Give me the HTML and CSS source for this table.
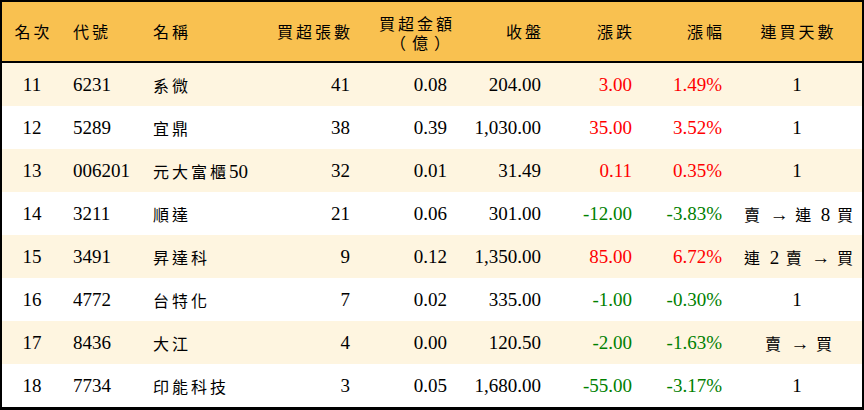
FILE: index.html
```html
<!DOCTYPE html>
<html lang="zh-Hant">
<head>
<meta charset="utf-8">
<link rel="stylesheet" href="styles.css">
</head>
<body>
<div class="board">
  <div class="row head">
    <div class="c c1">名次</div>
    <div class="c c2">代號</div>
    <div class="c c3">名稱</div>
    <div class="c c4">買超張數</div>
    <div class="c c5 two"><span>買超金額</span><span class="paren">（億）</span></div>
    <div class="c c6">收盤</div>
    <div class="c c7">漲跌</div>
    <div class="c c8">漲幅</div>
    <div class="c c9">連買天數</div>
  </div>
  <div class="row odd">
    <div class="c c1">11</div><div class="c c2">6231</div><div class="c c3 cjk">系微</div>
    <div class="c c4">41</div><div class="c c5">0.08</div><div class="c c6">204.00</div>
    <div class="c c7 up">3.00</div><div class="c c8 up">1.49%</div><div class="c c9">1</div>
  </div>
  <div class="row">
    <div class="c c1">12</div><div class="c c2">5289</div><div class="c c3 cjk">宜鼎</div>
    <div class="c c4">38</div><div class="c c5">0.39</div><div class="c c6">1,030.00</div>
    <div class="c c7 up">35.00</div><div class="c c8 up">3.52%</div><div class="c c9">1</div>
  </div>
  <div class="row odd">
    <div class="c c1">13</div><div class="c c2">006201</div><div class="c c3 cjk">元大富櫃<span class="num">50</span></div>
    <div class="c c4">32</div><div class="c c5">0.01</div><div class="c c6">31.49</div>
    <div class="c c7 up">0.11</div><div class="c c8 up">0.35%</div><div class="c c9">1</div>
  </div>
  <div class="row">
    <div class="c c1">14</div><div class="c c2">3211</div><div class="c c3 cjk">順達</div>
    <div class="c c4">21</div><div class="c c5">0.06</div><div class="c c6">301.00</div>
    <div class="c c7 down">-12.00</div><div class="c c8 down">-3.83%</div><div class="c c9 cjk seq">賣 <span class="arw">→</span> 連 <span class="num">8</span> 買</div>
  </div>
  <div class="row odd">
    <div class="c c1">15</div><div class="c c2">3491</div><div class="c c3 cjk">昇達科</div>
    <div class="c c4">9</div><div class="c c5">0.12</div><div class="c c6">1,350.00</div>
    <div class="c c7 up">85.00</div><div class="c c8 up">6.72%</div><div class="c c9 cjk seq">連 <span class="num">2</span> 賣 <span class="arw">→</span> 買</div>
  </div>
  <div class="row">
    <div class="c c1">16</div><div class="c c2">4772</div><div class="c c3 cjk">台特化</div>
    <div class="c c4">7</div><div class="c c5">0.02</div><div class="c c6">335.00</div>
    <div class="c c7 down">-1.00</div><div class="c c8 down">-0.30%</div><div class="c c9">1</div>
  </div>
  <div class="row odd">
    <div class="c c1">17</div><div class="c c2">8436</div><div class="c c3 cjk">大江</div>
    <div class="c c4">4</div><div class="c c5">0.00</div><div class="c c6">120.50</div>
    <div class="c c7 down">-2.00</div><div class="c c8 down">-1.63%</div><div class="c c9 cjk seq">賣 <span class="arw">→</span> 買</div>
  </div>
  <div class="row">
    <div class="c c1">18</div><div class="c c2">7734</div><div class="c c3 cjk">印能科技</div>
    <div class="c c4">3</div><div class="c c5">0.05</div><div class="c c6">1,680.00</div>
    <div class="c c7 down">-55.00</div><div class="c c8 down">-3.17%</div><div class="c c9">1</div>
  </div>
</div>
</body>
</html>
```

FILE: styles.css
```css
html, body {
  margin: 0;
  padding: 0;
  background: #ffffff;
}

.board {
  width: 864px;
  height: 410px;
  box-sizing: border-box;
  border-top: 2px solid #000;
  border-left: 2px solid #000;
  border-right: 2px solid #000;
  border-bottom: 3px solid #000;
  font-family: "Liberation Serif", "Noto Sans CJK TC", serif;
  color: #000;
  background: #ffffff;
}

.row {
  display: grid;
  grid-template-columns: 60px 91px 117px 90px 97px 94px 91px 90px 130px;
  height: 43px;
  align-items: center;
  font-size: 19px;
  background: #ffffff;
}

.row.odd {
  background: #fef5e0;
}

.row.head {
  height: 59px;
  background: #f9c150;
  border-bottom: 2px solid #000;
  font-family: "Noto Sans CJK TC", sans-serif;
  font-size: 16px;
  letter-spacing: 3px;
  line-height: 19px;
}

.c {
  white-space: nowrap;
}

.c1 { text-align: center; }
.c2 { padding-left: 11px; }
.c3 { padding-left: 0; }
.c4, .c5, .c6, .c7, .c8 { text-align: right; padding-right: 10px; }
.c9 { text-align: center; }

.head .c4, .head .c6, .head .c7, .head .c8 { padding-right: 7px; }
.head .c5 { padding-right: 2px; }
.head .c1, .head .c9 { padding-left: 3px; }

.two {
  display: flex;
  flex-direction: column;
  align-items: flex-end;
  margin-top: 2px;
}

.two .paren {
  letter-spacing: 6px;
  margin-right: -1px;
}

.cjk {
  font-family: "Noto Sans CJK TC", sans-serif;
  font-size: 16px;
  letter-spacing: 3px;
}

.cjk .num,
.cjk .arw {
  font-family: "Liberation Serif", serif;
  font-size: 19px;
  letter-spacing: 0;
}

.seq {
  padding-left: 6px;
}

.up { color: #ff0000; }
.down { color: #008000; }
```
